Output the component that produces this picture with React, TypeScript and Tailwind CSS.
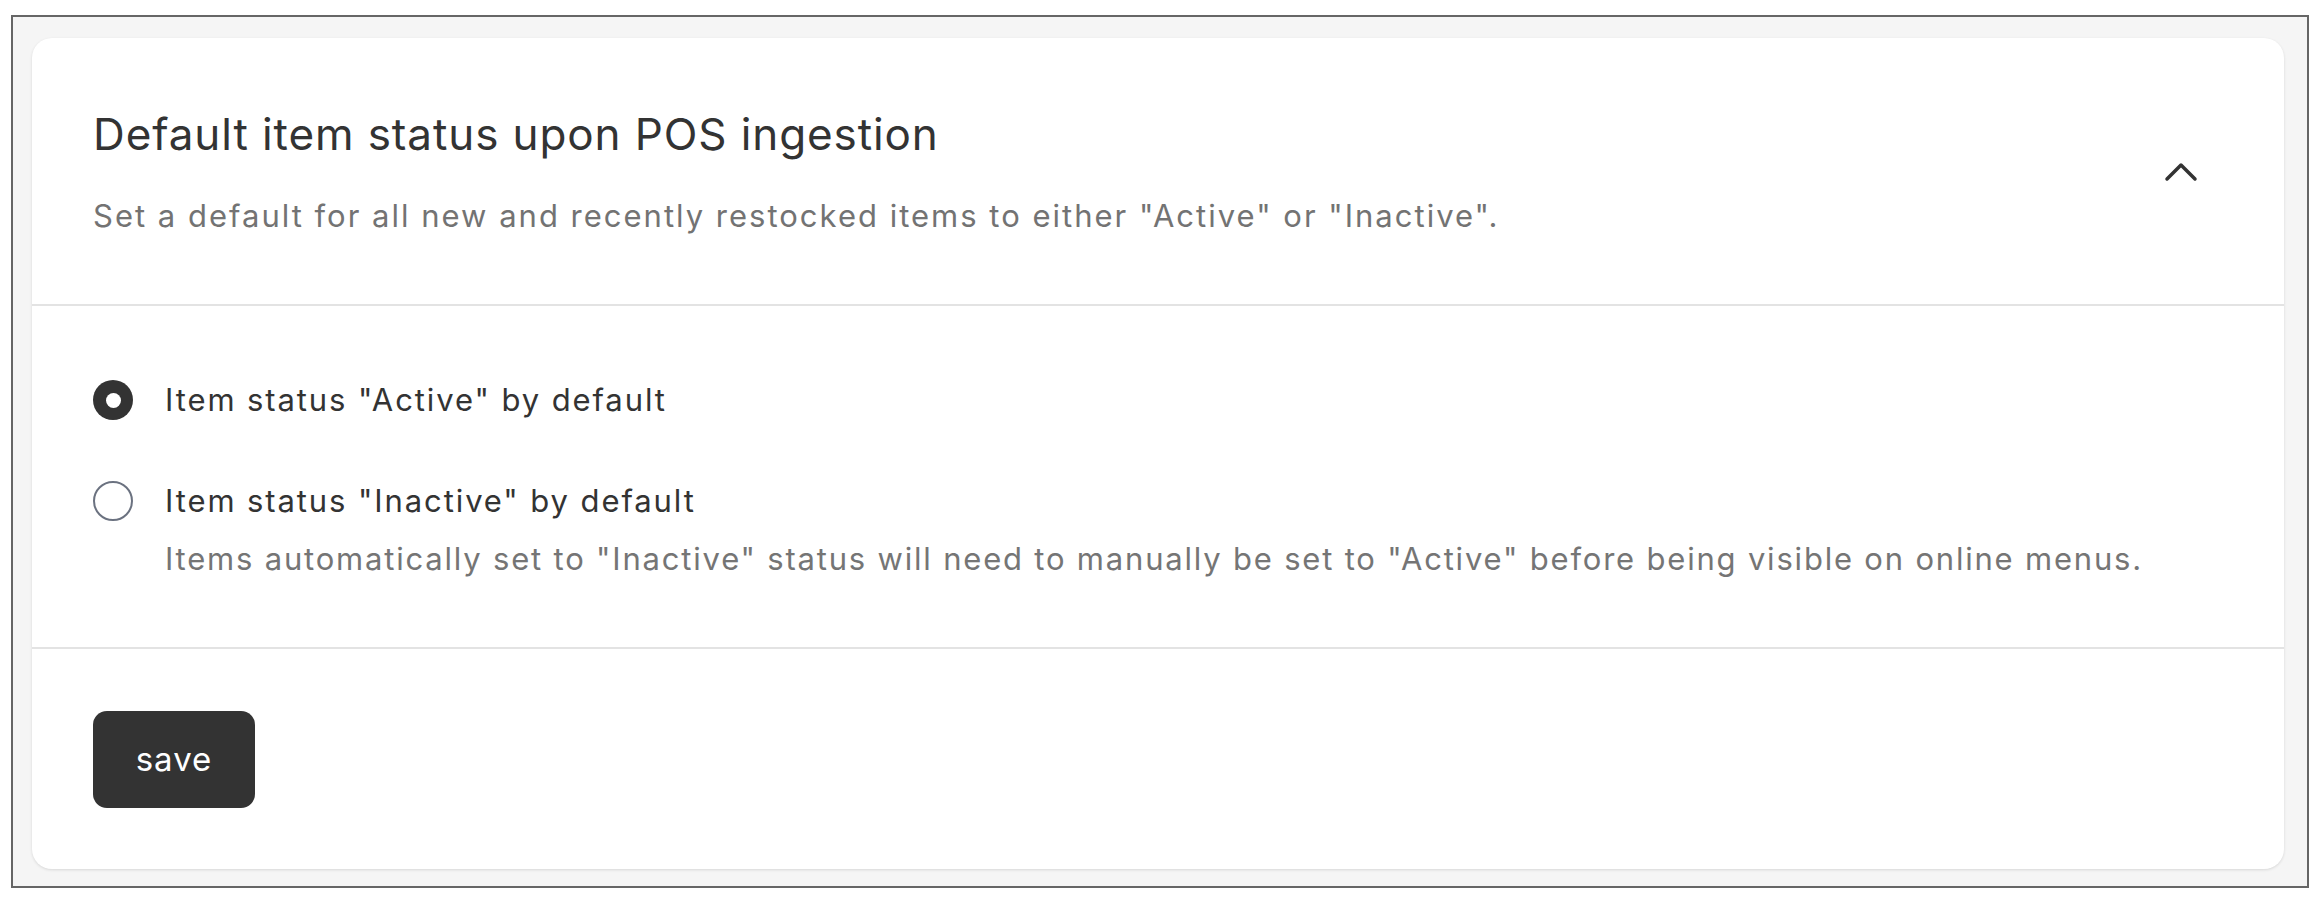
import { useState } from 'react'

const options = [
  { id: 'active', label: 'Item status "Active" by default', help: '' },
  {
    id: 'inactive',
    label: 'Item status "Inactive" by default',
    help: 'Items automatically set to "Inactive" status will need to manually be set to "Active" before being visible on online menus.',
  },
] as const

export default function App() {
  const [status, setStatus] = useState<string>('active')

  return (
    <div className="bg-white pt-[15px] pb-[8px] px-[11px] font-['Inter',sans-serif]">
      <div className="border-2 border-[#666] bg-[#f5f5f5] pt-[21px] pb-[17px] pl-[19px] pr-[23px]">
        <div className="rounded-[20px] bg-white shadow-[0_1px_3px_rgba(0,0,0,0.12)]">
          <div className="flex items-center justify-between pt-[68px] pb-[68px] pl-[61px] pr-[86px]">
            <div>
              <h2 className="text-[44px] leading-[56px] font-normal tracking-[0.9px] text-[#333]">
                Default item status upon POS ingestion
              </h2>
              <p className="mt-[34px] text-[31px] leading-[40px] tracking-[2px] text-[#737373]">
                Set a default for all new and recently restocked items to either "Active" or "Inactive".
              </p>
            </div>
            <button className="mt-[1px] text-[#333]" aria-label="Collapse">
              <svg width="34" height="20" viewBox="0 0 34 20" fill="none">
                <polyline points="3,17 17,3 31,17" stroke="currentColor" strokeWidth="3.5" strokeLinecap="round" strokeLinejoin="round" />
              </svg>
            </button>
          </div>

          <div className="border-t-2 border-[#e3e3e3] pt-[74px] pb-[68px] pl-[61px]">
            <ul className="flex flex-col gap-[61px]">
              {options.map((opt) => (
                <li key={opt.id} className="flex items-start gap-[32px] cursor-pointer" onClick={() => setStatus(opt.id)}>
                  <span className="flex h-[40px] items-center">
                    {status === opt.id ? (
                      <span className="flex h-[40px] w-[40px] items-center justify-center rounded-full bg-[#333]">
                        <span className="h-[15px] w-[15px] rounded-full bg-white" />
                      </span>
                    ) : (
                      <span className="h-[40px] w-[40px] rounded-full border-2 border-[#6b7280]" />
                    )}
                  </span>
                  <div>
                    <p className="text-[31px] leading-[40px] tracking-[1.9px] text-[#333]">{opt.label}</p>
                    {opt.help && (
                      <p className="mt-[18px] text-[31px] leading-[40px] tracking-[1.8px] text-[#757575]">{opt.help}</p>
                    )}
                  </div>
                </li>
              ))}
            </ul>
          </div>

          <div className="border-t-2 border-[#e3e3e3] pt-[62px] pb-[61px] pl-[61px]">
            <button className="h-[97px] w-[162px] rounded-[14px] bg-[#333] text-[33px] tracking-[1px] text-white">
              save
            </button>
          </div>
        </div>
      </div>
    </div>
  )
}
